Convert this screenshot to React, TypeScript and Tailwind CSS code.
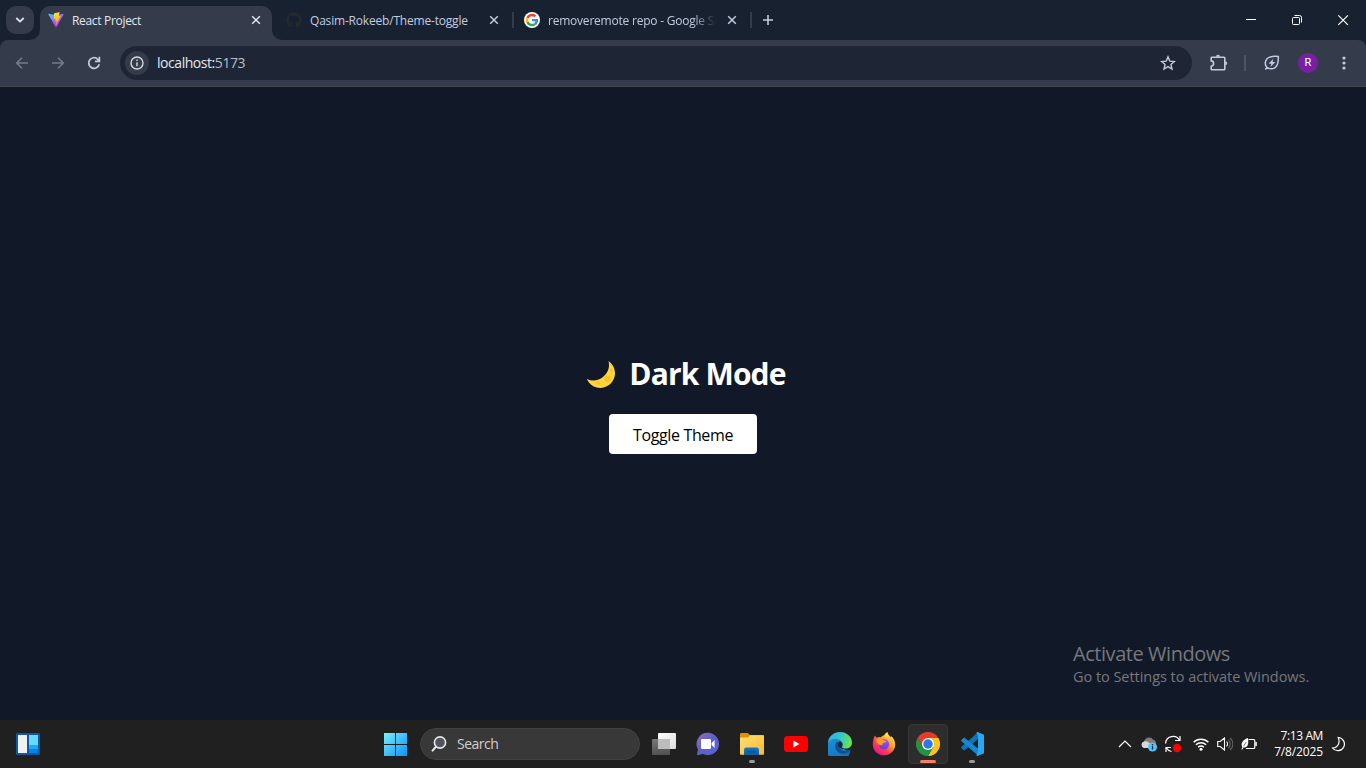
import type { ReactNode } from "react";
import { FaGithub } from "react-icons/fa";

const Close = () => (
  <svg width="10" height="10" viewBox="0 0 10 10" fill="none" stroke="currentColor" strokeWidth="1.5">
    <path d="M1.2 1.2l7.6 7.6M8.8 1.2L1.2 8.8" />
  </svg>
);

const ViteLogo = () => (
  <svg width="16" height="16" viewBox="0 0 410 404">
    <defs>
      <linearGradient id="va" x1="6" y1="33" x2="235" y2="344" gradientUnits="userSpaceOnUse">
        <stop stopColor="#41D1FF" />
        <stop offset="1" stopColor="#BD34FE" />
      </linearGradient>
      <linearGradient id="vb" x1="194" y1="8" x2="236" y2="292" gradientUnits="userSpaceOnUse">
        <stop stopColor="#FFEA83" />
        <stop offset=".083" stopColor="#FFDD35" />
        <stop offset="1" stopColor="#FFA800" />
      </linearGradient>
    </defs>
    <path fill="url(#va)" d="M399.641 59.525L215.643 388.545C211.844 395.338 202.084 395.378 198.228 388.618L10.582 59.556C6.381 52.19 12.68 43.267 21.028 44.759L205.223 77.682C206.398 77.892 207.601 77.89 208.776 77.676L389.119 44.806C397.439 43.289 403.768 52.143 399.641 59.525Z" />
    <path fill="url(#vb)" d="M292.965 1.574L156.801 28.255C154.563 28.694 152.906 30.59 152.771 32.866L144.395 174.33C144.198 177.662 147.258 180.248 150.51 179.498L188.42 170.749C191.967 169.931 195.172 173.055 194.443 176.622L183.18 231.775C182.422 235.487 185.907 238.661 189.532 237.56L212.947 230.446C216.577 229.344 220.065 232.527 219.297 236.242L201.398 322.875C200.278 328.294 207.486 331.249 210.492 326.603L212.5 323.5L323.454 102.072C325.312 98.365 322.108 94.137 318.036 94.923L279.014 102.454C275.347 103.161 272.227 99.746 273.262 96.158L298.731 7.867C299.767 4.273 296.636.855 292.965 1.574Z" />
  </svg>
);

const GoogleLogo = () => (
  <svg width="16" height="16" viewBox="0 0 16 16">
    <circle cx="8" cy="8" r="8" fill="#fff" />
    <g transform="translate(1.7 1.7) scale(.2625)">
      <path fill="#EA4335" d="M24 9.5c3.54 0 6.71 1.22 9.21 3.6l6.85-6.85C35.9 2.38 30.47 0 24 0 14.62 0 6.51 5.38 2.56 13.22l7.98 6.19C12.43 13.72 17.74 9.5 24 9.5z" />
      <path fill="#4285F4" d="M46.98 24.55c0-1.57-.15-3.09-.38-4.55H24v9.02h12.94c-.58 2.96-2.26 5.48-4.78 7.18l7.73 6c4.51-4.18 7.09-10.36 7.09-17.65z" />
      <path fill="#FBBC05" d="M10.53 28.59c-.48-1.45-.76-2.99-.76-4.59s.27-3.14.76-4.59l-7.98-6.19C.92 16.46 0 20.12 0 24c0 3.88.92 7.54 2.56 10.78l7.97-6.19z" />
      <path fill="#34A853" d="M24 48c6.48 0 11.93-2.13 15.89-5.81l-7.73-6c-2.15 1.45-4.92 2.3-8.16 2.3-6.26 0-11.57-4.22-13.47-9.91l-7.98 6.19C6.51 42.62 14.62 48 24 48z" />
    </g>
  </svg>
);

function TabStrip() {
  return (
    <div className="flex h-10 items-start bg-[#182130] pt-1.5 text-[12px] text-[#c3cbe0]">
      <div className="ml-1.5 flex size-7 items-center justify-center rounded-[10px] bg-[#343c4c] text-[#dfe3ee]">
        <svg width="10" height="8" viewBox="0 0 10 8" fill="none" stroke="currentColor" strokeWidth="1.8">
          <path d="M1.3 2L5 5.6 8.7 2" />
        </svg>
      </div>
      <div className="relative ml-1.5 flex h-[34px] w-[232px] items-start rounded-t-[10px] bg-[#343c4c] pt-1.5 pl-2 text-[#e3e6ef]">
        <svg className="absolute bottom-0 -left-2.5" width="10" height="10" viewBox="0 0 10 10">
          <path d="M10 0v10H0A10 10 0 0 0 10 0z" fill="#343c4c" />
        </svg>
        <svg className="absolute -right-2.5 bottom-0" width="10" height="10" viewBox="0 0 10 10">
          <path d="M0 0v10h10A10 10 0 0 1 0 0z" fill="#343c4c" />
        </svg>
        <ViteLogo />
        <span className="ml-2 w-[179px] leading-[17px] tracking-[-0.32px] whitespace-nowrap">React Project</span>
        <span className="pt-[3px]"><Close /></span>
      </div>
      <div className="ml-[14px] flex w-[228px] items-start pt-1.5">
        <FaGithub size={16} color="#24292e" />
        <span className="ml-2 w-[179px] leading-[17px] tracking-[-0.19px] whitespace-nowrap">Qasim-Rokeeb/Theme-toggle</span>
        <span className="pt-[3px]"><Close /></span>
      </div>
      <div className="mt-1.5 -ml-[2px] h-4 w-[2px] bg-[#343c4c]" />
      <div className="ml-[10px] flex w-[227px] items-start pt-1.5">
        <GoogleLogo />
        <span className="ml-2 w-[168px] overflow-hidden leading-[17px] tracking-[-0.22px] whitespace-nowrap [mask-image:linear-gradient(to_right,black_86%,transparent_100%)]">removeremote repo - Google Search</span>
        <span className="ml-[11px] pt-[3px]"><Close /></span>
      </div>
      <div className="mt-1.5 -ml-[1px] h-4 w-[2px] bg-[#343c4c]" />
      <svg className="mt-[8px] ml-[10px]" width="12" height="12" viewBox="0 0 12 12" stroke="currentColor" strokeWidth="1.6">
        <path d="M6 1v10M1 6h10" />
      </svg>
      <div className="mt-[8px] mr-[17px] ml-auto flex items-center gap-[34px] text-white">
        <svg width="12" height="12" viewBox="0 0 12 12" stroke="currentColor"><path d="M1 5.5h10" /></svg>
        <svg width="12" height="12" viewBox="0 0 12 12" fill="none" stroke="currentColor">
          <rect x="1.5" y="3.5" width="7" height="7" rx="1" />
          <path d="M3.5 1.5h5a2 2 0 0 1 2 2v5" />
        </svg>
        <svg width="12" height="12" viewBox="0 0 12 12" stroke="currentColor" strokeWidth="1.2"><path d="M1.3 1.3l9.6 9.6M10.9 1.3L1.3 10.9" /></svg>
      </div>
    </div>
  );
}

function Toolbar() {
  return (
    <div className="bg-[#182130]">
      <div className="flex h-[47px] items-start rounded-t-[8px] border-b border-[#46494f] bg-[#343c4c] pt-1.5 text-[#c3cbe0]">
        <div className="flex h-[34px] w-[120px] items-center gap-5 pl-[14px]">
          <svg width="16" height="16" viewBox="0 0 16 16" fill="none" stroke="#737b8d" strokeWidth="1.6"><path d="M14 8H3M8 2.7L2.7 8 8 13.3" /></svg>
          <svg width="16" height="16" viewBox="0 0 16 16" fill="none" stroke="#737b8d" strokeWidth="1.6"><path d="M2 8h11M8 2.7L13.3 8 8 13.3" /></svg>
          <svg width="16" height="16" viewBox="0 0 16 16" fill="none" stroke="currentColor" strokeWidth="1.7"><path d="M13.2 9.2A5.3 5.3 0 1 1 11.8 4.3L13.3 5.9M13.4 1.8v4.5H9" /></svg>
        </div>
        <div className="flex h-[34px] w-[1072px] items-center rounded-full bg-[#1e2636] pr-4 pl-[5px]">
          <div className="flex size-6 items-center justify-center rounded-full bg-[#343c4c]">
            <svg width="14" height="14" viewBox="0 0 14 14" fill="none" stroke="#d5d9e2" strokeWidth="1.4">
              <circle cx="7" cy="7" r="6" />
              <path d="M7 6.2v4M7 3.6v1.5" />
            </svg>
          </div>
          <span className="ml-2 text-[14px] leading-[18px] tracking-[-0.45px] text-[#e3e6ee]">
            localhost:<span className="text-[#b9bfca]">5173</span>
          </span>
          <svg className="ml-auto" width="16" height="16" viewBox="0 0 16 16" fill="none" stroke="#c7cad1" strokeWidth="1.4">
            <path d="M8 1.9l1.8 4.2 4.6.4-3.5 3 1.1 4.5L8 11.6 4 14l1.1-4.5-3.5-3 4.6-.4z" />
          </svg>
        </div>
        <div className="ml-[18px] flex h-[34px] items-center">
          <svg width="18" height="18" viewBox="0 0 18 18" fill="none" stroke="currentColor" strokeWidth="1.6">
            <path d="M2 3.2h12a.8.8 0 0 1 .8.8v11a.8.8 0 0 1-.8.8H2a.8.8 0 0 1-.8-.8v-2.8c3.2-.3 3.2-5 0-5.3V4A.8.8 0 0 1 2 3.2z" />
            <path d="M6 2.8a2 2 0 0 1 4 0M15.2 7.2a2 2 0 0 1 0 4" fill="currentColor" stroke="none" />
          </svg>
          <div className="ml-4 h-4 w-[2px] bg-[#4c5566]" />
          <svg className="ml-[18px]" width="16" height="16" viewBox="0 0 16 16" fill="none" stroke="currentColor" strokeWidth="1.5">
            <path d="M14.3 1.5C9 .9 1.500 1.500 1.300 8.200c-.1 3.200 2.400 5.600 5.500 5.600 6.900 0 7.800-6.800 7.500-12.300zM3.500 12l-2.200 2.400" />
            <path d="M9.200 3.800L4.600 8.700h2.700L6.500 12l4.900-5H8.600z" fill="currentColor" stroke="none" />
          </svg>
          <div className="ml-[18px] flex size-5 items-center justify-center rounded-full bg-[#7b1fa2] pt-px font-['Roboto','sans-serif'] text-[11px] text-white">R</div>
          <svg className="ml-[24px]" width="4" height="14" viewBox="0 0 4 14" fill="currentColor">
            <circle cx="2" cy="2" r="1.6" /><circle cx="2" cy="7" r="1.6" /><circle cx="2" cy="12" r="1.6" />
          </svg>
        </div>
      </div>
    </div>
  );
}

const Moon = () => (
  <svg width="30" height="30" viewBox="0 0 30 30">
    <path d="M22.5 1A14.7 14.7 0 1 1 .8 19 15.7 15.7 0 0 0 22.5 1z" fill="#ffd43c" />
    <circle cx="21.5" cy="18.7" r="3.2" fill="#fbc02d" />
    <circle cx="12" cy="23.2" r="1.9" fill="#fbc02d" />
    <circle cx="25.7" cy="10" r="1.4" fill="#fbc02d" />
  </svg>
);

const StartIcon = () => (
  <svg width="24" height="24" viewBox="0 0 24 24">
    <defs>
      <linearGradient id="win" x1="0" y1="0" x2="24" y2="24" gradientUnits="userSpaceOnUse">
        <stop stopColor="#7df0ff" /><stop offset=".5" stopColor="#3fc0fb" /><stop offset="1" stopColor="#0a93fa" />
      </linearGradient>
    </defs>
    <path fill="url(#win)" d="M0 1h11v11H0zM12 1h11v11H12zM0 13h11v11H0zM12 13h11v11H12z" />
  </svg>
);

const TaskView = () => (
  <svg width="24" height="24" viewBox="0 0 24 24">
    <defs>
      <linearGradient id="tv" x1="0" y1="0" x2="1" y2="1"><stop stopColor="#fff" /><stop offset="1" stopColor="#dcdcdc" /></linearGradient>
      <linearGradient id="tw" x1="0" y1="0" x2="0" y2="1"><stop stopColor="#777" /><stop offset="1" stopColor="#515151" /></linearGradient>
    </defs>
    <rect x="0" y="7" width="18" height="16" rx="1" fill="url(#tw)" />
    <rect x="6" y="1" width="18" height="16" rx="1" fill="url(#tv)" />
    <path d="M6 7h12v10H6z" fill="#bdbdbd" />
  </svg>
);

const Chat = () => (
  <svg width="24" height="24" viewBox="0 0 24 24">
    <defs>
      <linearGradient id="ch" x1="0" y1="0" x2="1" y2="1"><stop stopColor="#9a6bb0" /><stop offset=".5" stopColor="#5f5fc9" /><stop offset="1" stopColor="#5961d8" /></linearGradient>
    </defs>
    <path d="M12 .8A11.2 11.2 0 1 1 7 22.1L.8 23.3 2 17.5A11.2 11.2 0 0 1 12 .8z" fill="url(#ch)" />
    <rect x="5" y="7" width="10" height="10" rx="1.3" fill="#fff" />
    <path d="M15.6 11l3-3v8l-3-3z" fill="#fff" />
  </svg>
);

const Folder = () => (
  <svg width="24" height="24" viewBox="0 0 24 24">
    <defs>
      <linearGradient id="fo" x1="0" y1="0" x2="1" y2="1"><stop stopColor="#ffe078" /><stop offset="1" stopColor="#fdb92d" /></linearGradient>
      <linearGradient id="fb" x1="0" y1="0" x2="0" y2="1"><stop stopColor="#0f78d0" /><stop offset="1" stopColor="#125ca0" /></linearGradient>
    </defs>
    <path d="M0 2.2Q0 1 1.2 1h6.5l2.2 2H23q1 0 1 1v5H0z" fill="#dd9300" />
    <path d="M0 5.5h8l2-2.3h13q1 0 1 1V22q0 .8-.8.8H.8Q0 22.8 0 22z" fill="url(#fo)" />
    <path d="M4 23v-5q0-2.4 2.4-2.4h10.2q2.4 0 2.4 2.4v5z" fill="url(#fb)" />
    <rect x="7" y="18.8" width="9" height="1.6" rx=".6" fill="#0c518d" />
  </svg>
);

const YouTube = () => (
  <svg width="24" height="24" viewBox="0 0 24 24">
    <rect y="4" width="24" height="16" rx="3.6" fill="#f00" /><path d="M9.4 8.5v7l6-3.5z" fill="#fff" />
  </svg>
);

const Edge = () => (
  <svg width="24" height="24" viewBox="0 0 24 24">
    <defs>
      <linearGradient id="e1" x1="0" y1=".3" x2="1" y2=".5"><stop stopColor="#2fb0ea" /><stop offset=".5" stopColor="#35c8c6" /><stop offset="1" stopColor="#6ee447" /></linearGradient>
      <linearGradient id="e2" x1="0" y1="0" x2=".5" y2="1"><stop stopColor="#2098dc" /><stop offset="1" stopColor="#1170c0" /></linearGradient>
    </defs>
    <path d="M.1 11C.1 5 5 0 12 2c6 2 6 9 3 13-.3 2 4 4 7.500 2.800A12 12 0 1 1 .1 11z" fill="url(#e2)" />
    <path d="M.1 11.200C.6 4.800 5.500 0 12 0c7 0 12 5 12 10.600 0 4-3 6-6.200 6-2.700 0-4.200-1-3.800-1.900.5-1 .8-1.600.5-3-.5-2.700-3.600-5-7.200-5C3.800 6.700 1 8.700.1 11.200z" fill="url(#e1)" />
    <path d="M8.900 9.800C6.600 12.500 7 17 9.500 19.500c3 3 8.500 3 12.100-.1.800-.8.300-1.600-.6-1.200-3.500 1.600-8.300.6-9.600-2.500-.7-1.700-.4-3.100.3-4.100-.5-1.300-1.700-2.200-2.800-1.800z" fill="#124f8e" />
    <path d="M14 14.700c.5-1 .8-1.600.5-3-.3-1.200-1.300-2.300-2.600-2.500-1.500.5-2.500 3.200-1.100 5.600 1.100 1.800 3.300 2.600 5.400 1.800-1.700-.4-2.500-1.200-2.200-1.900z" fill="#1c2733" />
  </svg>
);

const Firefox = () => (
  <svg width="24" height="24" viewBox="0 0 24 24">
    <defs>
      <linearGradient id="ff" x1=".85" y1=".1" x2=".2" y2=".9"><stop stopColor="#fff14a" /><stop offset=".35" stopColor="#ffa52e" /><stop offset=".65" stopColor="#ff4650" /><stop offset="1" stopColor="#e81684" /></linearGradient>
      <linearGradient id="fg" x1=".6" y1="0" x2=".4" y2="1"><stop stopColor="#b04cf0" /><stop offset="1" stopColor="#5a45d8" /></linearGradient>
      <linearGradient id="fh" x1="0" y1="0" x2="0" y2="1"><stop stopColor="#fff04a" /><stop offset="1" stopColor="#ff8a26" /></linearGradient>
    </defs>
    <path d="M3 3.500c.5 1 1 1.600 1.700 2.200C6 4.900 7.600 4.800 9 5.200c.8-1 2-1.700 3.200-2C13 1.900 14 .9 15.500.2c-.1 2.500 1.600 3.400 3.400 5 .3-.2.300-.8.200-1.300C21.700 6 23.200 9.300 23.200 12.500 23.200 18.600 18.200 23.300 12 23.300S.8 18.500.8 12.400C.8 9 1.600 6 3 3.500z" fill="url(#ff)" />
    <circle cx="12" cy="12.300" r="5.200" fill="url(#fg)" />
    <path d="M4.500 7.500c1.700-1.400 4.300-1.500 6-.1 1 .9 2.200 1.200 4 1.500-.2 1-1.800 1.800-3.100 2.100-1.500.5-1.400 1.700-.5 2.300-2.600.3-5-1-6.400-3z" fill="#ffa12b" />
    <path d="M15.500.2c-1.500.7-2.600 2-3 4.200 2.600.2 4.600 2 5.200 4.500.5 2-.1 4.300-1.500 5.800 3.300-.2 5.200-3.500 4.500-6.600-.6-3.200-5.100-4.300-5.200-7.900z" fill="url(#fh)" />
  </svg>
);

const Chrome = () => (
  <svg width="24" height="24" viewBox="0 0 24 24">
    <path d="M12 6h10.400A12 12 0 0 1 12 24l5.200-9z" fill="#fcc31e" />
    <path d="M1.600 6A12 12 0 0 0 12 24l5.200-9L12 12 6.800 15z" fill="#229342" />
    <path d="M12 6h10.400A12 12 0 0 0 1.600 6l5.200 9z" fill="#e33b2e" />
    <circle cx="12" cy="12" r="6" fill="#fff" /><circle cx="12" cy="12" r="4.750" fill="#2b78ec" />
  </svg>
);

const VsCode = () => (
  <svg width="24" height="24" viewBox="0 0 24 24" strokeLinejoin="round">
    <path d="M1.200 15.500L17.500 1.200V7L4.200 18z" fill="#0a76b8" stroke="#0a76b8" />
    <path d="M1.200 8.500L4.200 6 18 17v6z" fill="#1588cf" stroke="#1588cf" />
    <path d="M17.500 0L24 2.800v18.400L17.500 24c-.7 0-1-.4-1-1L18 20V4l-1.500-3c0-.6.4-1 1-1z" fill="#2aa6f2" />
  </svg>
);

function PinnedApp({ children, active, dot }: { children: ReactNode; active?: boolean; dot?: boolean }) {
  return (
    <div className={active ? "relative flex size-10 items-center justify-center rounded-[4px] border border-[#383838] bg-[#2d2d2d]" : "relative flex size-10 items-center justify-center"}>
      {children}
      {active && <span className="absolute bottom-0 h-[3px] w-4 rounded-full bg-[#f77f63]" />}
      {dot && <span className="absolute bottom-[1px] h-[3px] w-1.5 rounded-full bg-[#9a9a9a]" />}
    </div>
  );
}

const Cell = ({ children }: { children: ReactNode }) => <div className="flex w-6 justify-center">{children}</div>;

function Taskbar() {
  return (
    <div className="flex h-12 items-center bg-[#202020] text-white">
      <div className="w-[384px] pl-4">
        <svg width="24" height="22" viewBox="0 0 24 22">
          <rect width="24" height="22" rx="1.500" fill="#0c59a4" />
          <rect x="2" y="2" width="9" height="18" rx=".5" fill="#f1f1f1" />
          <path d="M13 2h9v10h-9z" fill="#68d8ff" /><path d="M13 12h9v4h-9z" fill="#1da7f6" /><path d="M13 16h9v4h-9z" fill="#0880e6" />
        </svg>
      </div>
      <div className="w-9"><StartIcon /></div>
      <div className="flex h-8 w-[220px] items-center rounded-full border border-[#404040] bg-[#383838] pl-[10px]">
        <svg width="18" height="18" viewBox="0 0 18 18" fill="none" stroke="#e6e8ec" strokeWidth="1.600" strokeLinecap="round">
          <circle cx="9" cy="7.500" r="5.600" fill="#52565a" /><path d="M5 11.800L1.500 15.600" strokeWidth="2" />
        </svg>
        <span className="ml-2 text-[14px] leading-5 tracking-[-0.5px] text-[#d0d0d0]">Search</span>
      </div>
      <div className="ml-1 flex gap-1">
        <PinnedApp><TaskView /></PinnedApp>
        <PinnedApp><Chat /></PinnedApp>
        <PinnedApp dot><Folder /></PinnedApp>
        <PinnedApp><YouTube /></PinnedApp>
        <PinnedApp><Edge /></PinnedApp>
        <PinnedApp><Firefox /></PinnedApp>
        <PinnedApp active><Chrome /></PinnedApp>
        <PinnedApp dot><VsCode /></PinnedApp>
      </div>
      <div className="mr-[20px] ml-auto flex items-center">
        <Cell><svg width="14" height="8" viewBox="0 0 14 8" fill="none" stroke="#fff" strokeWidth="1.200"><path d="M1 7l6-6 6 6" /></svg></Cell>
        <Cell>
          <svg width="18" height="16" viewBox="0 0 18 16">
            <path d="M5 10a4.500 4.500 0 0 1 8-6.500c2 .3 3 2 3 4.500z" fill="#7d7d7d" />
            <path d="M4 12a3.300 3.300 0 0 1 0-6.400c3-.9 4.500.5 6 2L12 12z" fill="#d7d7d7" />
            <circle cx="12.500" cy="11" r="4.500" fill="#54c4fb" /><path d="M12.500 10v3.500M12.500 8v1.200" stroke="#142c3c" strokeWidth="1.300" />
          </svg>
        </Cell>
        <Cell>
          <svg width="18" height="18" viewBox="0 0 18 18" fill="none" stroke="#fff" strokeWidth="1.200">
            <path d="M1.600 8.500A7.500 7.500 0 0 1 15.500 5M16 1v4.500h-5M2 17v-4.500h5M2.500 13c.8 1.600 2.500 3 5 3.500" />
            <circle cx="13" cy="13" r="4.200" fill="#f00" stroke="none" />
          </svg>
        </Cell>
        <div className="w-1" />
        <Cell>
          <svg width="16" height="13" viewBox="0 0 16 13" fill="none" stroke="#fff" strokeWidth="1.400">
            <path d="M.6 4.300a10.500 10.500 0 0 1 14.800 0M2.900 6.800a7.200 7.200 0 0 1 10.200 0M5.100 9.200a4.100 4.100 0 0 1 5.800 0" /><circle cx="8" cy="11.200" r="1.500" fill="#fff" stroke="none" />
          </svg>
        </Cell>
        <Cell>
          <svg width="16" height="14" viewBox="0 0 16 14" fill="none" stroke="#fff" strokeWidth="1.100">
            <path d="M.7 4.500h2.500L7.500 1v12L3.200 9.500H.7zM9.500 4.700a3 3 0 0 1 0 4.600" /><path d="M11.300 2.800a5.500 5.500 0 0 1 0 8.400M13.200 1a8 8 0 0 1 0 12" stroke="#666" />
          </svg>
        </Cell>
        <Cell>
          <svg width="16" height="12" viewBox="0 0 16 12" fill="none" stroke="#fff" strokeWidth="1.200">
            <path d="M7.500 1.500h5a1.300 1.300 0 0 1 1.300 1.300v6.400a1.300 1.300 0 0 1-1.300 1.300H5M15.200 4v4" />
            <path d="M6.800 0c.8 3 .6 6-.4 7.800-.9 1.500-2.500 2-3.700 1.500L1.200 11.800.4 11.200l1-2C-.8 6 2 1.500 6.800 0z" fill="#fff" stroke="none" /><path d="M2.600 8.200L5 4.200" stroke="#202020" strokeWidth=".6" />
          </svg>
        </Cell>
        <div className="flex w-[62px] flex-col items-end text-[12px] leading-4 whitespace-nowrap">
          <span className="tracking-[-0.4px]">7:13 AM</span>
          <span className="tracking-[-0.14px]">7/8/2025</span>
        </div>
        <svg className="ml-2" width="15" height="16" viewBox="0 0 15 16" fill="none" stroke="#fff" strokeWidth="1.200"><path d="M7.200 1.500A6.600 6.600 0 1 1 1.500 12C5 11.700 6.500 10 7.400 8.200 8.500 6 8.200 3.700 7.200 1.500z" /></svg>
      </div>
    </div>
  );
}

export default function App() {
  return (
    <div className="flex h-[768px] w-[1366px] flex-col overflow-hidden bg-[#111827] font-['Open_Sans','Noto_Sans',sans-serif]">
      <TabStrip />
      <Toolbar />
      <main className="relative flex flex-1 flex-col items-center pt-[269px]">
        <h1 className="flex h-9 items-center gap-[13px] pl-[6px] text-[30px] leading-9 font-bold text-white">
          <span className="pt-[2px]"><Moon /></span><span className="tracking-[-0.85px]">Dark Mode</span>
        </h1>
        <button className="mt-[22px] h-10 w-[148px] rounded-[4px] bg-white pt-px text-[16px] leading-6 tracking-[-0.36px] text-black">Toggle Theme</button>
        <div className="absolute top-[555px] left-[1073px] whitespace-nowrap text-[#76787c]">
          <p className="text-[20px] leading-6 tracking-[-0.45px]">Activate Windows</p>
          <p className="text-[14.5px] leading-[22px] tracking-[-0.04px]">Go to Settings to activate Windows.</p>
        </div>
      </main>
      <Taskbar />
    </div>
  );
}
